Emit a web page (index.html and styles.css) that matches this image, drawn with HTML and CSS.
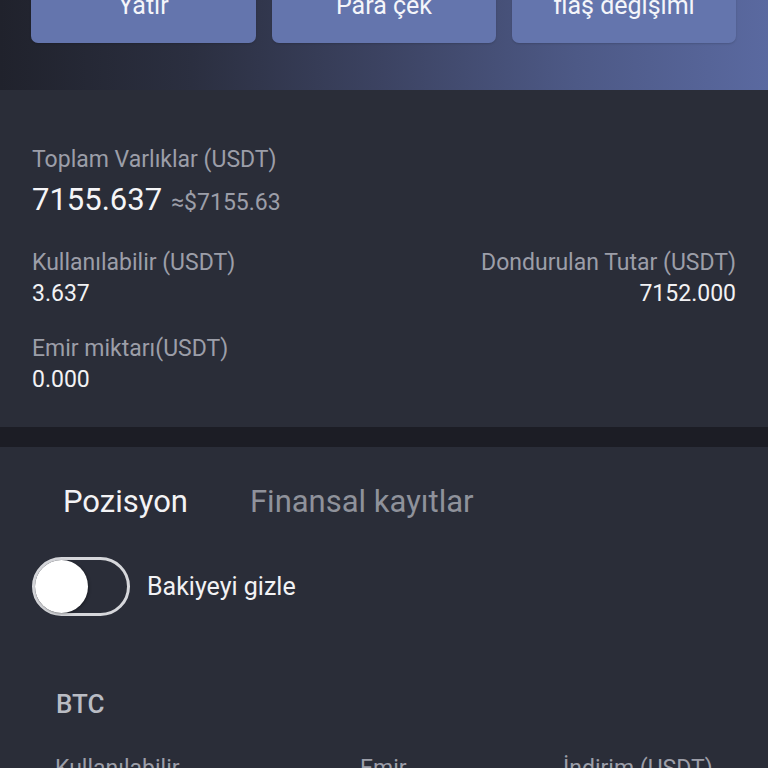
FILE: index.html
```html
<!DOCTYPE html>
<html lang="tr">
<head>
<meta charset="utf-8">
<title>Varlıklar</title>
<link rel="stylesheet" href="styles.css">
</head>
<body>
<header class="hero">
  <div class="actions">
    <button class="action">Yatır</button>
    <button class="action">Para çek</button>
    <button class="action">flaş değişimi</button>
  </div>
</header>

<section class="summary">
  <div class="label">Toplam Varlıklar (USDT)</div>
  <div class="total"><span class="total-num">7155.637</span><span class="total-usd">≈$7155.63</span></div>
  <div class="pair">
    <div class="col">
      <div class="label">Kullanılabilir (USDT)</div>
      <div class="value">3.637</div>
    </div>
    <div class="col col-right">
      <div class="label">Dondurulan Tutar (USDT)</div>
      <div class="value">7152.000</div>
    </div>
  </div>
  <div class="order">
    <div class="label">Emir miktarı(USDT)</div>
    <div class="value">0.000</div>
  </div>
</section>

<div class="divider"></div>

<section class="positions">
  <nav class="tabs">
    <span class="tab tab-active">Pozisyon</span>
    <span class="tab">Finansal kayıtlar</span>
  </nav>
  <label class="hide-row">
    <span class="switch"><span class="knob"></span></span>
    <span class="hide-text">Bakiyeyi gizle</span>
  </label>
  <div class="coin">BTC</div>
  <div class="coin-grid">
    <div class="label">Kullanılabilir</div>
    <div class="label">Emir</div>
    <div class="label">İndirim (USDT)</div>
  </div>
</section>
</body>
</html>
```
FILE: styles.css
```css
html, body {
  margin: 0;
  padding: 0;
  background: #2a2d38;
  font-family: Roboto, "Noto Sans", "Liberation Sans", sans-serif;
  overflow: hidden;
}

.hero {
  margin-top: -33px;
  height: 123px;
  background: linear-gradient(90deg, #20222c 0%, #2b2f40 25%, #3c4362 50%, #4d5986 75%, #5a69a0 100%);
  box-sizing: border-box;
  padding: 0 32px 0 31px;
}

.actions {
  display: grid;
  grid-template-columns: 225px 224px 224px;
  gap: 16px;
}

.action {
  height: 76px;
  border: none;
  border-radius: 7px;
  background: #6475ad;
  color: #f4f5fa;
  font-family: inherit;
  font-size: 25px;
  padding: 0;
  box-shadow: 0 1px 2px rgba(0,0,0,0.15);
}

.summary {
  padding: 55px 32px 32px 32px;
}

.label {
  font-size: 23px;
  line-height: 30px;
  color: #9c9ea8;
}

.value {
  font-size: 23px;
  line-height: 30px;
  color: #f2f2f4;
  margin-top: 1px;
}

.total {
  margin-top: 5px;
  display: flex;
  align-items: baseline;
  gap: 9px;
  line-height: 40px;
}

.total-num {
  font-size: 31px;
  color: #f5f5f7;
}

.total-usd {
  font-size: 23px;
  color: #9c9ea8;
}

.pair {
  margin-top: 25px;
  display: flex;
  justify-content: space-between;
}

.col-right {
  text-align: right;
}

.order {
  margin-top: 25px;
}

.divider {
  height: 20px;
  background: #1c1d25;
}

.positions {
  padding: 35px 0 0 0;
}

.tabs {
  display: flex;
  padding-left: 32px;
}

.tab {
  font-size: 31px;
  line-height: 40px;
  padding: 0 31px;
  color: #8f929b;
}

.tab-active {
  color: #f3f3f5;
}

.hide-row {
  margin: 35px 0 0 32px;
  display: flex;
  align-items: center;
  gap: 17px;
}

.switch {
  width: 98px;
  height: 59px;
  box-sizing: border-box;
  border: 3px solid #d6d7db;
  border-radius: 30px;
  display: flex;
  align-items: center;
}

.knob {
  width: 53px;
  height: 53px;
  border-radius: 50%;
  background: #ffffff;
  box-shadow: 1px 1px 3px rgba(0,0,0,0.35);
}

.hide-text {
  font-size: 25px;
  color: #f2f2f4;
}

.coin {
  margin: 71px 0 0 56px;
  font-size: 26px;
  font-weight: 500;
  line-height: 34px;
  color: #b9bcc4;
}

.coin-grid {
  margin: 33px 0 0 55px;
  display: grid;
  grid-template-columns: 305px 203px 1fr;
}
```
